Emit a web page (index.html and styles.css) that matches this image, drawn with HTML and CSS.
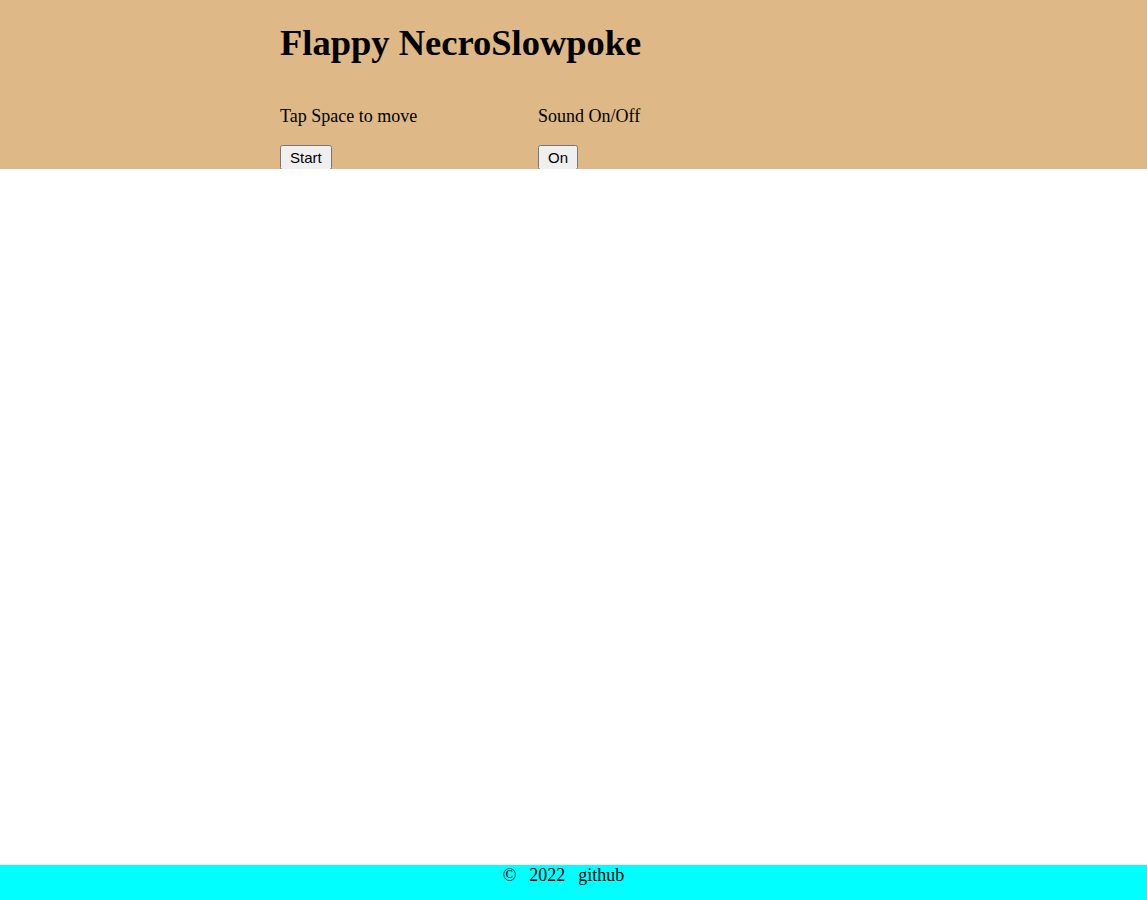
FILE: index.html
```html
<!DOCTYPE html>
<html>
<head>
<meta charset="utf-8">
<title>Flappy NecroSlowpoke</title>
<link rel="stylesheet" href="styles.css">
</head>
<body>
<div class="page">
  <header class="header">
    <div class="inner">
      <h1 class="title">Flappy NecroSlowpoke</h1>
      <div class="controls">
        <div class="control">
          <p class="label">Tap Space to move</p>
          <button class="btn">Start</button>
        </div>
        <div class="control">
          <p class="label">Sound On/Off</p>
          <button class="btn">On</button>
        </div>
      </div>
    </div>
  </header>
  <main class="main"></main>
  <footer class="footer">
    <span>©</span><span>2022</span><span>github</span>
  </footer>
</div>
</body>
</html>
```
FILE: styles.css
```css
html, body {
  margin: 0;
  padding: 0;
  height: 100%;
}
body {
  font-family: "Liberation Serif", "Times New Roman", serif;
  color: #000;
}
.page {
  display: flex;
  flex-direction: column;
  min-height: 100vh;
}
.header {
  background: #deb887;
  height: 169px;
  overflow: hidden;
}
.inner {
  width: 587px;
  margin: 0 auto;
}
.title {
  font-size: 36.5px;
  font-weight: bold;
  margin: 0;
  padding-top: 22px;
  line-height: 41px;
}
.controls {
  display: grid;
  grid-template-columns: 258px 258px;
  margin-top: 43px;
}
.label {
  font-size: 18px;
  margin: 0 0 18px;
  line-height: 21px;
}
.btn {
  font-family: "Liberation Sans", Arial, sans-serif;
  font-size: 15px;
  padding: 1px 8px 2px;
  margin: 0;
  height: 25px;
  display: block;
}
.main {
  flex: 1;
}
.footer {
  background: #00ffff;
  height: 35px;
  display: flex;
  justify-content: center;
  gap: 13px;
  font-size: 18px;
  line-height: 21px;
  padding-top: 0;
  padding-right: 20px;
  box-sizing: border-box;
}
```
